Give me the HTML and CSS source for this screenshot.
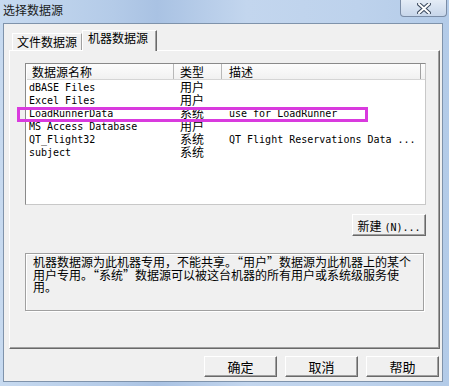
FILE: index.html
```html
<!DOCTYPE html>
<html lang="zh-CN">
<head>
    <meta charset="UTF-8">
    <title>选择数据源</title>
    <link rel="stylesheet" href="styles.css">
</head>
<body>
    <div class="window">
        <div class="titlebar">
            <div class="title">选择数据源</div>
            <div class="close">
                <svg width="14" height="11" viewBox="0 0 14 11">
                    <path d="M2 1 L12 10 M12 1 L2 10" stroke="#3b4a5e" stroke-width="4" stroke-linecap="square"/>
                    <path d="M2 1 L12 10 M12 1 L2 10" stroke="#ffffff" stroke-width="2" stroke-linecap="square"/>
                </svg>
            </div>
        </div>
        <div class="client">
            <div class="tabs">
                <div class="tab">文件数据源</div>
                <div class="tab active">机器数据源</div>
            </div>
            <div class="panel">
                <div class="listview">
                    <div class="row header">
                        <div class="cell">数据源名称</div>
                        <div class="cell">类型</div>
                        <div class="cell">描述</div>
                    </div>
                    <div class="row">
                        <div class="cell mono">dBASE Files</div>
                        <div class="cell">用户</div>
                        <div class="cell mono"></div>
                    </div>
                    <div class="row">
                        <div class="cell mono">Excel Files</div>
                        <div class="cell">用户</div>
                        <div class="cell mono"></div>
                    </div>
                    <div class="row">
                        <div class="cell mono">LoadRunnerData</div>
                        <div class="cell">系统</div>
                        <div class="cell mono">use for LoadRunner</div>
                    </div>
                    <div class="row">
                        <div class="cell mono">MS Access Database</div>
                        <div class="cell">用户</div>
                        <div class="cell mono"></div>
                    </div>
                    <div class="row">
                        <div class="cell mono">QT_Flight32</div>
                        <div class="cell">系统</div>
                        <div class="cell mono">QT Flight Reservations Data ...</div>
                    </div>
                    <div class="row">
                        <div class="cell mono">subject</div>
                        <div class="cell">系统</div>
                        <div class="cell mono"></div>
                    </div>
                </div>
                <div class="list-actions">
                    <button class="btn btn-new">新建<span class="mono">(N)...</span></button>
                </div>
                <div class="desc">
                    机器数据源为此机器专用，不能共享。“用户”数据源为此机器上的某个<br>
                    用户专用。“系统”数据源可以被这台机器的所有用户或系统级服务使<br>
                    用。
                </div>
            </div>
            <div class="buttons">
                <button class="btn">确定</button>
                <button class="btn">取消</button>
                <button class="btn">帮助</button>
            </div>
        </div>
        <!-- annotation drawn over the screenshot -->
        <div class="highlight"></div>
    </div>
</body>
</html>
```

FILE: styles.css
```css
body {
    margin: 0;
    font-family: "Noto Sans CJK SC", "DejaVu Sans", sans-serif;
    font-size: 12px;
    color: #000;
}
.window {
    position: relative;
    width: 449px;
    height: 386px;
    display: flex;
    flex-direction: column;
    background: linear-gradient(to right, #c7daf0 0%, #b4cbe8 25%, #a9c2e3 35%, #c3d6ee 55%, #bdd2ec 80%, #b3cbe8 100%);
    overflow: hidden;
}
.titlebar {
    height: 23px;
    display: flex;
    justify-content: space-between;
    align-items: flex-start;
}
.title {
    padding: 2px 0 0 3px;
    line-height: 16px;
    font-size: 12px;
    color: #1b1b1b;
}
.close {
    width: 45px;
    height: 16px;
    margin-right: 2px;
    border: 1px solid #7a8ca6;
    border-top: none;
    border-radius: 0 0 4px 4px;
    background: linear-gradient(#e4ecf6, #c7d6ea);
    display: flex;
    align-items: center;
    justify-content: center;
}
.client {
    flex: 1;
    margin: 0 6px 4px 3px;
    background: #f0f0f0;
    border: 1px solid #7f93ab;
    display: flex;
    flex-direction: column;
}
.tabs {
    display: flex;
    align-items: flex-end;
    height: 20px;
    margin-top: 6px;
    padding-left: 8px;
    position: relative;
    z-index: 1;
}
.tab {
    height: 16px;
    padding: 0 4px;
    line-height: 16px;
    border: 1px solid #fff;
    border-bottom: none;
    border-right: 1px solid #a0a0a0;
    background: #f0f0f0;
}
.tab.active {
    height: 20px;
    margin-bottom: -1px;
    padding: 0 8px 0 5px;
    line-height: 14px;
    border-right: 1px solid #696969;
    box-shadow: inset -1px 0 #a0a0a0;
}
.panel {
    height: 285px;
    margin: 0 2px 0 5px;
    padding: 12px 0 0 15px;
    border: 1px solid #fff;
    border-right-color: #696969;
    border-bottom-color: #696969;
    box-shadow: inset -1px -1px #a0a0a0;
}
.listview {
    width: 398px;
    height: 140px;
    border: 1px solid #8a8a8a;
    border-right-color: #c8c8c8;
    border-bottom-color: #c8c8c8;
    background: #fff;
    padding-left: 1px;
}
.row {
    display: grid;
    grid-template-columns: 147px 48px 199px;
    height: 13px;
    line-height: 13px;
    white-space: nowrap;
}
.row .cell:first-child {
    padding-left: 2px;
}
.row .cell:nth-child(2) {
    padding-left: 6px;
    line-height: 11px;
}
.row .cell:nth-child(3) {
    padding-left: 7px;
}
.header {
    height: 15px;
    line-height: 15px;
    margin-bottom: 1px;
    background: linear-gradient(#fdfdfd, #f1f1f1);
    border-bottom: 1px solid #d5d5d5;
}
.header .cell {
    border-right: 1px solid #b8b8b8;
}
.header .cell:first-child {
    padding-left: 5px;
}
.header .cell:nth-child(2) {
    line-height: 15px;
}
.header .cell:nth-child(3) {
    border-right: 1px solid #a0a0a0;
}
.mono {
    font-family: "DejaVu Sans Mono", "Liberation Mono", monospace;
    font-size: 10px;
}
.list-actions {
    display: flex;
    justify-content: flex-end;
    width: 400px;
    margin-top: 9px;
}
.btn {
    font-family: inherit;
    font-size: 12px;
    background: #f0f0f0;
    border: 1px solid;
    border-color: #fff #696969 #696969 #fff;
    box-shadow: inset -1px -1px #a0a0a0;
    padding: 0;
    color: #000;
}
.btn-new {
    width: 74px;
    height: 22px;
    margin-right: -1px;
}
.btn-new .mono {
    margin-left: 3px;
}
.desc {
    width: 390px;
    height: 54px;
    margin-top: 17px;
    padding: 2px 0 0 7px;
    border: 1px solid #a0a0a0;
    box-shadow: inset 1px 1px #fff, 1px 1px #fff;
    line-height: 12.5px;
    white-space: nowrap;
}
.buttons {
    display: flex;
    justify-content: flex-end;
    gap: 8px;
    margin-top: 7px;
    padding-right: 3px;
}
.buttons .btn {
    width: 73px;
    height: 21px;
    line-height: 17px;
    font-size: 13px;
}
.highlight {
    position: absolute;
    left: 17px;
    top: 107px;
    width: 345px;
    height: 9px;
    border: 3px solid #d93ade;
}
```
